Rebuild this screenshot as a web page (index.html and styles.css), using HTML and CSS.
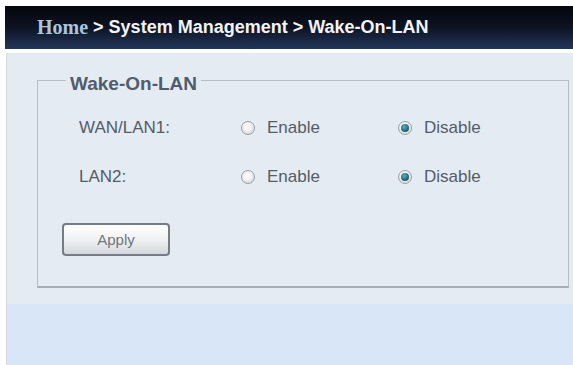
FILE: index.html
```html
<!DOCTYPE html>
<html lang="en">
<head>
  <meta charset="UTF-8" />
  <meta name="viewport" content="width=device-width, initial-scale=1.0"/>
  <title>Wake-On-LAN</title>
  <link rel="stylesheet" href="styles.css">
</head>
<body>
  <!-- Breadcrumb bar -->
  <div class="crumbs">
    <span class="home">Home</span>
    <span class="path">&gt; System Management &gt; Wake-On-LAN</span>
  </div>

  <!-- Main panel -->
  <div class="panel">
    <div class="panel-top">
      <fieldset class="box">
        <legend>Wake-On-LAN</legend>

        <div class="row">
          <span class="label">WAN/LAN1:</span>
          <span class="opt"><span class="radio"></span>Enable</span>
          <span class="opt"><span class="radio on"></span>Disable</span>
        </div>
        <div class="row">
          <span class="label">LAN2:</span>
          <span class="opt"><span class="radio"></span>Enable</span>
          <span class="opt"><span class="radio on"></span>Disable</span>
        </div>

        <button class="btn">Apply</button>
      </fieldset>
    </div>
    <div class="panel-bottom"></div>
  </div>
</body>
</html>
```

FILE: styles.css
```css
/* Reset & base */
* {
  margin: 0;
  padding: 0;
  box-sizing: border-box;
}
html, body {
  width: 100%;
  height: 100%;
  overflow: hidden;
  background: #fff;
  font-family: "Liberation Sans", Arial, sans-serif;
}
body {
  display: flex;
  flex-direction: column;
}

/* Breadcrumb bar */
.crumbs {
  margin: 6px 0 0 5px;
  height: 43px;
  display: flex;
  align-items: center;
  gap: 5px;
  padding-left: 32px;
  background: linear-gradient(to bottom, #05060b 0%, #0d1322 50%, #22365a 100%);
}
.crumbs .home {
  font-family: "Liberation Serif", "Times New Roman", serif;
  font-weight: bold;
  font-size: 20px;
  color: #a9c6dc;
}
.crumbs .path {
  font-weight: bold;
  font-size: 18px;
  color: #f2f4f6;
}

/* Panel */
.panel {
  flex: 1;
  margin: 4px 0 0 6px;
  border-left: 1px solid #d4d8dc;
  display: flex;
  flex-direction: column;
}
.panel-top {
  background: #e5ebf3;
  padding: 12px 4px 16px 30px;
}
.panel-bottom {
  flex: 1;
  background: #d9e6f8;
}

/* Fieldset */
.box {
  border: 1px solid #b6bec8;
  border-bottom: 2px solid #a6aeb8;
  padding: 18px 0 30px 24px;
}
.box legend {
  margin-left: 4px;
  padding: 8px 4px 0;
  font-size: 19px;
  line-height: 22px;
  font-weight: bold;
  color: #4f5d6c;
}

.row {
  display: grid;
  grid-template-columns: 162px 157px auto;
  align-items: center;
  height: 30px;
  margin-left: 17px;
  margin-bottom: 19px;
  font-size: 17px;
  color: #545c66;
}
.opt {
  display: flex;
  align-items: center;
  gap: 12px;
}

/* Radio buttons */
.radio {
  width: 14px;
  height: 14px;
  border-radius: 50%;
  border: 1px solid #9a9ea4;
  background: radial-gradient(circle at 45% 40%, #ffffff 0%, #f0f0f0 45%, #c4c6c8 100%);
  display: flex;
  align-items: center;
  justify-content: center;
}
.radio.on::after {
  content: "";
  width: 8px;
  height: 8px;
  border-radius: 50%;
  background: radial-gradient(circle at 40% 35%, #5fb0be 0%, #1f6e7e 55%, #0d3a44 100%);
}

/* Apply button */
.btn {
  margin-top: 12px;
  width: 108px;
  height: 33px;
  border: 2px solid #747c86;
  border-radius: 4px;
  background: linear-gradient(to bottom, #ffffff 0%, #f0f1f2 50%, #d4d8dc 100%);
  font-family: "Liberation Sans", Arial, sans-serif;
  font-size: 15px;
  color: #6e7680;
}
```
